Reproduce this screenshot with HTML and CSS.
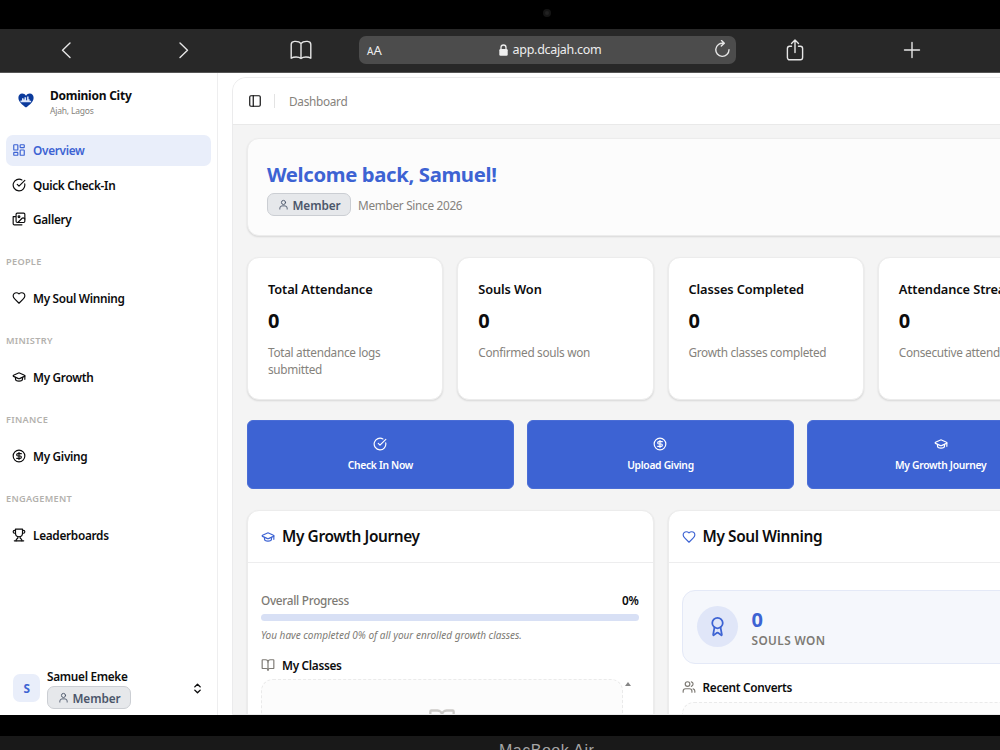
FILE: index.html
```html
<!DOCTYPE html>
<html lang="en">
<head>
    <meta charset="UTF-8">
    <meta name="viewport" content="width=device-width, initial-scale=1.0">
    <title>Dominion City - Dashboard</title>
    <link rel="stylesheet" href="styles.css">
</head>
<body>
    <!-- Icon set -->
    <svg class="sprite" aria-hidden="true">
        <symbol id="grid" viewBox="0 0 24 24"><rect x="3" y="3" width="7" height="9" rx="1"/><rect x="14" y="3" width="7" height="5" rx="1"/><rect x="14" y="12" width="7" height="9" rx="1"/><rect x="3" y="16" width="7" height="5" rx="1"/></symbol>
        <symbol id="check" viewBox="0 0 24 24"><path d="M21.8 10A10 10 0 1 1 17 3.34"/><path d="m9 11 3 3L22 4"/></symbol>
        <symbol id="images" viewBox="0 0 24 24"><path d="M17 22H4a2 2 0 0 1-2-2V8h4"/><path d="m22 12-1.3-1.300a2.400 2.400 0 0 0-3.400 0L10 18"/><circle cx="12" cy="8" r="1.500"/><rect x="7" y="2" width="15" height="16" rx="2"/></symbol>
        <symbol id="heart" viewBox="0 0 24 24"><path d="M19 14c1.49-1.46 3-3.21 3-5.5A5.5 5.5 0 0 0 16.5 3c-1.76 0-3 .5-4.5 2-1.5-1.5-2.74-2-4.5-2A5.5 5.5 0 0 0 2 8.5c0 2.3 1.5 4.05 3 5.5l7 7Z"/></symbol>
        <symbol id="cap" viewBox="0 0 24 24"><path d="M21.42 10.92a1 1 0 0 0-.02-1.84L12.83 5.18a2 2 0 0 0-1.66 0L2.6 9.08a1 1 0 0 0 0 1.83l8.57 3.91a2 2 0 0 0 1.66 0z"/><path d="M22 10v6"/><path d="M6 12.5V16a6 3 0 0 0 12 0v-3.5"/></symbol>
        <symbol id="dollar" viewBox="0 0 24 24"><circle cx="12" cy="12" r="10"/><path d="M16 8h-6a2 2 0 1 0 0 4h4a2 2 0 1 1 0 4H8"/><path d="M12 18V6"/></symbol>
        <symbol id="trophy" viewBox="0 0 24 24"><path d="M6 9H4.5a2.5 2.5 0 0 1 0-5H6"/><path d="M18 9h1.5a2.5 2.5 0 0 0 0-5H18"/><path d="M4 22h16"/><path d="M10 14.66V17c0 .55-.47.98-.97 1.21C7.85 18.75 7 20.24 7 22"/><path d="M14 14.66V17c0 .55.47.98.97 1.21C16.15 18.75 17 20.24 17 22"/><path d="M18 2H6v7a6 6 0 0 0 12 0V2Z"/></symbol>
        <symbol id="user" viewBox="0 0 24 24"><circle cx="12" cy="7.5" r="4.5"/><path d="M20 22v-2a5 5 0 0 0-5-5H9a5 5 0 0 0-5 5v2"/></symbol>
        <symbol id="users" viewBox="0 0 24 24"><path d="M17 21v-2a4 4 0 0 0-4-4H6a4 4 0 0 0-4 4v2"/><circle cx="9.500" cy="7" r="4"/><path d="M22 21v-2a4 4 0 0 0-3-3.870"/><path d="M16 3.130a4 4 0 0 1 0 7.750"/></symbol>
        <symbol id="updown" viewBox="0 0 24 24"><path d="m7 15 5 5 5-5"/><path d="m7 9 5-5 5 5"/></symbol>
        <symbol id="panel" viewBox="0 0 24 24"><rect x="3" y="3" width="18" height="18" rx="2"/><path d="M9 3v18"/></symbol>
        <symbol id="book" viewBox="0 0 24 24"><path d="M12 7v14"/><path d="M3 18a1 1 0 0 1-1-1V4a1 1 0 0 1 1-1h5a4 4 0 0 1 4 4 4 4 0 0 1 4-4h5a1 1 0 0 1 1 1v13a1 1 0 0 1-1 1h-6a3 3 0 0 0-3 3 3 3 0 0 0-3-3z"/></symbol>
        <symbol id="award" viewBox="0 0 24 24"><path d="m15.48 12.89 1.51 8.53a.5.5 0 0 1-.81.47l-3.58-2.69a1 1 0 0 0-1.2 0l-3.58 2.69a.5.5 0 0 1-.81-.47l1.51-8.53"/><circle cx="12" cy="8" r="6"/></symbol>
    </svg>

    <div class="bezel-top"><span class="camera"></span></div>

    <div class="toolbar">
        <svg class="tool" width="24" height="24" viewBox="0 0 24 24"><path d="M15 5 7.500 12.300l7.500 7.300"/></svg>
        <svg class="tool" width="24" height="24" viewBox="0 0 24 24"><path d="M8 5 15.500 12.300l-7.500 7.300"/></svg>
        <svg class="tool" width="24" height="24" viewBox="0 0 24 24"><path d="M12 5.500v15M12 5.500C10.500 3.700 8 3.200 5.500 3.400c-2 .2-3.300 1.300-3.300 3v13.800c2.500-1.500 7.300-1.800 9.800.3 2.500-2.100 7.300-1.800 9.800-.3V6.400c0-1.700-1.300-2.800-3.300-3-2.500-.2-5 .3-6.500 2.100z"/></svg>
        <div class="address">
            <span class="reader"><small>A</small>A</span>
            <span class="url">
                <svg width="9" height="12" viewBox="0 0 9 12"><path d="M2 5.500V3.500a2.500 2.500 0 0 1 5 0v2" fill="none" stroke="#eee" stroke-width="1.300"/><rect x=".3" y="5" width="8.400" height="6.800" rx="1.200" fill="#eee"/></svg>
                app.dcajah.com
            </span>
            <svg class="tool" width="18" height="20" viewBox="0 0 18 20"><path d="M10.600 3.300A6.600 6.600 0 1 0 16 9.800M8.500.500l2.800 2.800-3 2.800"/></svg>
        </div>
        <svg class="tool" width="24" height="24" viewBox="0 0 24 24"><path d="M8.500 8.200H6.600a2.200 2.200 0 0 0-2.200 2.200v9.200a2.200 2.200 0 0 0 2.200 2.200h10.800a2.200 2.200 0 0 0 2.200-2.200v-9.200a2.200 2.200 0 0 0-2.200-2.200h-1.900M12 14.500V2.200M8.500 5.500 12 2l3.500 3.500"/></svg>
        <svg class="tool" width="24" height="24" viewBox="0 0 24 24"><path d="M12 4.500v15M4.500 12h15"/></svg>
    </div>

    <div class="app">
        <aside class="sidebar">
            <div class="brand">
                <svg width="16" height="15" viewBox="0 0 16 15"><path d="M8 14.500C4 11.500.4 8.500.4 4.700.4 2.300 2 .6 4.200.6 5.800.6 7.100 1.400 8 2.700 8.900 1.400 10.200.6 11.800.6c2.200 0 3.800 1.700 3.800 4.100 0 3.800-3.600 6.800-7.600 9.800z" fill="#0b3a9c"/><path d="M2.500 9.200V7.500H4V5.200h1.500v1.300h1V4.200h1.600v3.100h1V3.600h1.500v2.600h1v1.500h1.500v1.500z" fill="#dce6fa"/></svg>
                <div>
                    <div class="brand-name">Dominion City</div>
                    <div class="brand-sub">Ajah, Lagos</div>
                </div>
            </div>
            <nav class="nav">
                <a class="nav-item active"><svg class="icon"><use href="#grid"/></svg>Overview</a>
                <a class="nav-item"><svg class="icon"><use href="#check"/></svg>Quick Check-In</a>
                <a class="nav-item"><svg class="icon"><use href="#images"/></svg>Gallery</a>
            </nav>
            <div class="nav-label">PEOPLE</div>
            <a class="nav-item"><svg class="icon"><use href="#heart"/></svg>My Soul Winning</a>
            <div class="nav-label">MINISTRY</div>
            <a class="nav-item"><svg class="icon"><use href="#cap"/></svg>My Growth</a>
            <div class="nav-label">FINANCE</div>
            <a class="nav-item"><svg class="icon"><use href="#dollar"/></svg>My Giving</a>
            <div class="nav-label">ENGAGEMENT</div>
            <a class="nav-item"><svg class="icon"><use href="#trophy"/></svg>Leaderboards</a>

            <div class="account">
                <div class="avatar">S</div>
                <div class="account-info">
                    <div class="account-name">Samuel Emeke</div>
                    <span class="badge"><svg class="icon"><use href="#user"/></svg>Member</span>
                </div>
                <svg class="icon"><use href="#updown"/></svg>
            </div>
        </aside>

        <main class="main">
            <header class="topbar">
                <svg class="icon"><use href="#panel"/></svg>
                <span class="divider"></span>
                <span class="crumb">Dashboard</span>
            </header>
            <div class="content">
                <section class="card welcome">
                    <h1>Welcome back, Samuel!</h1>
                    <div class="meta">
                        <span class="badge"><svg class="icon"><use href="#user"/></svg>Member</span>
                        <span class="since">Member Since 2026</span>
                    </div>
                </section>

                <section class="stats">
                    <div class="card stat">
                        <h2>Total Attendance</h2>
                        <strong>0</strong>
                        <p>Total attendance logs submitted</p>
                    </div>
                    <div class="card stat">
                        <h2>Souls Won</h2>
                        <strong>0</strong>
                        <p>Confirmed souls won</p>
                    </div>
                    <div class="card stat">
                        <h2>Classes Completed</h2>
                        <strong>0</strong>
                        <p>Growth classes completed</p>
                    </div>
                    <div class="card stat">
                        <h2>Attendance Streak</h2>
                        <strong>0</strong>
                        <p>Consecutive attendance</p>
                    </div>
                </section>

                <section class="actions">
                    <button class="action"><svg class="icon"><use href="#check"/></svg>Check In Now</button>
                    <button class="action"><svg class="icon"><use href="#dollar"/></svg>Upload Giving</button>
                    <button class="action"><svg class="icon"><use href="#cap"/></svg>My Growth Journey</button>
                </section>

                <section class="panels">
                    <div class="card panel">
                        <div class="panel-head"><svg class="icon"><use href="#cap"/></svg>My Growth Journey</div>
                        <div class="panel-body">
                            <div class="progress-row"><span>Overall Progress</span><b>0%</b></div>
                            <div class="progress"></div>
                            <p class="note">You have completed 0% of all your enrolled growth classes.</p>
                            <div class="sub-head"><svg class="icon"><use href="#book"/></svg>My Classes</div>
                            <div class="scroll-area">
                                <div class="empty"><svg class="icon"><use href="#book"/></svg></div>
                                <span class="scroll-arrow"></span>
                            </div>
                        </div>
                    </div>
                    <div class="card panel">
                        <div class="panel-head"><svg class="icon"><use href="#heart"/></svg>My Soul Winning</div>
                        <div class="panel-body">
                            <div class="souls">
                                <div class="medal"><svg class="icon"><use href="#award"/></svg></div>
                                <div class="souls-info">
                                    <div class="souls-count">0</div>
                                    <div class="souls-label">SOULS WON</div>
                                </div>
                            </div>
                            <div class="sub-head converts"><svg class="icon"><use href="#users"/></svg>Recent Converts</div>
                            <div class="empty"></div>
                        </div>
                    </div>
                </section>
            </div>
        </main>
    </div>

    <div class="bezel-bottom"></div>
    <div class="chin"><span>MacBook Air</span></div>
</body>
</html>
```

FILE: styles.css
```css
* {
    box-sizing: border-box;
}
body {
    margin: 0;
    height: 750px;
    display: flex;
    flex-direction: column;
    overflow: hidden;
    background: #000;
    color: #0c0c0d;
    font-family: "Noto Sans", "Open Sans", sans-serif;
    font-size: 11.8px;
    letter-spacing: -0.3px;
}
h1, h2, p {
    margin: 0;
}
.sprite {
    position: absolute;
    width: 0;
    height: 0;
}
.icon {
    width: 14px;
    height: 14px;
    flex: none;
    fill: none;
    stroke: currentColor;
    stroke-width: 2;
    stroke-linecap: round;
    stroke-linejoin: round;
}

/* Device frame */
.bezel-top {
    flex: none;
    height: 29px;
    padding: 9px 0 0 543px;
}
.camera {
    display: block;
    width: 8px;
    height: 8px;
    border-radius: 50%;
    background: #222;
    border: 2px solid #151515;
}
.bezel-bottom {
    flex: none;
    height: 21px;
}
.chin {
    flex: none;
    height: 14px;
    padding: 5px 0 0 499px;
    overflow: hidden;
    background: #191919;
    color: #a5a5a5;
    font-family: "Liberation Sans", Arial, sans-serif;
    font-size: 16px;
    line-height: 19px;
    letter-spacing: 0.5px;
}

/* Browser toolbar */
.toolbar {
    flex: none;
    height: 44px;
    padding: 0 0 2px 8px;
    display: grid;
    grid-template-columns: 117px 117px 117px 377px 117px 117px;
    align-items: center;
    justify-items: center;
    background: #282828;
    border-bottom: 1px solid #555;
}
.tool {
    fill: none;
    stroke: #e6e6e6;
    stroke-width: 1.4;
    stroke-linecap: round;
    stroke-linejoin: round;
}
.address {
    width: 377px;
    height: 28px;
    padding: 0 5px 0 8px;
    display: flex;
    align-items: center;
    justify-content: space-between;
    border-radius: 7px;
    background: #4c4c4c;
    color: #eee;
}
.reader {
    width: 20px;
    font-size: 13px;
    letter-spacing: 0;
}
.reader small {
    font-size: 10px;
}
.url {
    display: flex;
    align-items: center;
    gap: 5px;
    font-size: 12.5px;
}

/* Sidebar */
.app {
    flex: none;
    height: 642px;
    display: flex;
    overflow: hidden;
    background: #fff;
}
.sidebar {
    flex: none;
    width: 218px;
    height: 642px;
    padding: 0 6px 6px 6px;
    display: flex;
    flex-direction: column;
    border-right: 1px solid #eeeeef;
}
.brand {
    height: 62px;
    padding: 15px 0 0 12px;
    display: flex;
    gap: 16px;
}
.brand > svg {
    margin-top: 5px;
}
.brand-name {
    font-size: 12px;
    font-weight: 700;
    line-height: 16px;
    letter-spacing: -0.25px;
}
.brand-sub {
    font-size: 8.5px;
    line-height: 13px;
    letter-spacing: -0.2px;
    color: #85827c;
}
.nav {
    display: flex;
    flex-direction: column;
    gap: 4px;
}
.nav-item {
    height: 30.5px;
    padding: 0 6px;
    display: flex;
    align-items: center;
    gap: 7px;
    border-radius: 7px;
    font-weight: 600;
}
.nav-item.active {
    background: #e9eefa;
    color: #3d63d3;
}
.nav-label {
    padding: 13.5px 0 7px;
    line-height: 28px;
    font-size: 9.2px;
    font-weight: 600;
    letter-spacing: 0.3px;
    color: #b3b1ad;
}
.account {
    margin-top: auto;
    padding: 0 7px;
    display: flex;
    align-items: center;
    gap: 7px;
}
.account > .icon {
    width: 13px;
    height: 13px;
    margin-bottom: 1px;
    stroke-width: 2.6;
}
.avatar {
    width: 27px;
    height: 28px;
    margin-bottom: 1px;
    border-radius: 7px;
    background: #e9eefa;
    color: #3d63d3;
    font-weight: 700;
    line-height: 28px;
    text-align: center;
}
.account-info {
    flex: 1;
}
.account-name {
    font-weight: 600;
    line-height: 17px;
}
.badge {
    width: 84px;
    height: 23px;
    display: flex;
    align-items: center;
    justify-content: center;
    gap: 4px;
    border: 1px solid #cbced3;
    border-radius: 7px;
    background: #e6e8eb;
    color: #4b566a;
    font-weight: 600;
    letter-spacing: -0.1px;
}
.badge .icon {
    width: 11px;
    height: 11px;
}
.account-info .badge {
    margin-top: 1px;
}

/* Main area */
.main {
    flex: none;
    width: 857px;
    margin: 4px 0 0 14px;
    border: 1px solid #ebebec;
    border-radius: 14px 14px 0 0;
    overflow: hidden;
    background: #f4f4f4;
}
.topbar {
    height: 47px;
    padding-left: 15px;
    display: flex;
    align-items: center;
    background: #fff;
    border-bottom: 1px solid #e9e9e9;
}
.divider {
    width: 1px;
    height: 14px;
    margin: 0 14px 0 12px;
    background: #e3e3e3;
}
.crumb {
    color: #85827c;
}
.content {
    padding: 13px 14px;
    display: flex;
    flex-direction: column;
    gap: 20.6px;
}
.card {
    border: 1px solid #ececec;
    border-radius: 12px;
    background: #fff;
    box-shadow: 0 1px 2px rgba(0, 0, 0, 0.12);
}
.welcome {
    height: 98px;
    padding: 22px 19px 0;
    background: #fcfcfc;
}
.welcome h1 {
    font-size: 20.3px;
    line-height: 27px;
    color: #3d63d3;
    letter-spacing: -0.35px;
}
.meta {
    margin-top: 5px;
    display: flex;
    align-items: center;
    gap: 7px;
}
.since {
    color: #85827c;
}
.stats {
    display: grid;
    grid-template-columns: repeat(4, 1fr);
    gap: 14px;
}
.stat {
    height: 143px;
    padding: 21px 20px;
}
.stat h2 {
    font-size: 12.8px;
    line-height: 20px;
    font-weight: 600;
    letter-spacing: -0.1px;
    white-space: nowrap;
}
.stat strong {
    display: block;
    margin-top: 8px;
    font-size: 20px;
    line-height: 27px;
}
.stat p {
    margin-top: 10px;
    line-height: 17px;
    color: #85827c;
}
.actions {
    display: grid;
    grid-template-columns: repeat(3, 1fr);
    gap: 13.5px;
}
.action {
    height: 69px;
    padding: 0;
    display: flex;
    flex-direction: column;
    align-items: center;
    justify-content: center;
    gap: 7px;
    border: 1px solid #4a6dd6;
    border-radius: 6px;
    background: #3d63d3;
    color: #fff;
    font-family: inherit;
    font-size: 10.3px;
    font-weight: 600;
    letter-spacing: -0.3px;
}
.panels {
    display: grid;
    grid-template-columns: 1fr 1fr;
    gap: 14px;
}
.panel {
    height: 400px;
}
.panel-head {
    height: 52px;
    padding: 1px 13px 0;
    display: flex;
    align-items: center;
    gap: 7px;
    border-bottom: 1px solid #ededee;
    font-size: 15.4px;
    font-weight: 600;
    letter-spacing: -0.38px;
}
.panel-head .icon {
    color: #3d63d3;
}
.panel-body {
    padding: 27px 14px 0 13px;
}
.progress-row {
    padding-top: 1px;
    display: flex;
    justify-content: space-between;
    line-height: 18px;
    color: #7d7a74;
}
.progress-row span {
    font-weight: 500;
}
.progress-row b {
    font-weight: 600;
    color: #0c0c0d;
}
.progress {
    height: 7px;
    margin-top: 5px;
    border-radius: 4px;
    background: #d8e0f5;
}
.note {
    margin-top: 6px;
    font-size: 10px;
    font-style: italic;
    line-height: 16px;
    letter-spacing: 0;
    color: #7d7a74;
}
.sub-head {
    margin-top: 13px;
    height: 18px;
    display: flex;
    align-items: center;
    gap: 7px;
    font-weight: 600;
}
.sub-head .icon {
    color: #7d7a74;
}
.scroll-area {
    margin-top: 5px;
    display: flex;
    align-items: flex-start;
    gap: 2px;
}
.empty {
    flex: 1;
    height: 150px;
    padding-top: 27px;
    border: 1px dashed #eaeaea;
    border-radius: 12px;
    background: #fcfcfc;
    text-align: center;
}
.empty .icon {
    width: 28px;
    height: 28px;
    color: #cbc9c6;
}
.scroll-arrow {
    margin: 3px 8px 0 0;
    border: 3px solid transparent;
    border-top: 0;
    border-bottom: 4px solid #858585;
}
.souls {
    height: 74px;
    padding: 0 14px;
    display: flex;
    align-items: center;
    gap: 14px;
    border: 1px solid #e4e9f7;
    border-radius: 13px;
    background: #f5f7fc;
}
.medal {
    width: 41px;
    height: 41px;
    display: flex;
    align-items: center;
    justify-content: center;
    border-radius: 50%;
    background: #e0e6f8;
    color: #3d63d3;
}
.medal .icon {
    width: 21px;
    height: 21px;
}
.souls-info {
    padding-top: 2px;
}
.souls-count {
    font-size: 20px;
    font-weight: 700;
    line-height: 25px;
    color: #3d63d3;
}
.souls-label {
    font-weight: 600;
    line-height: 17px;
    letter-spacing: 0.4px;
    color: #7d7a74;
}
.converts {
    margin-top: 14px;
}
.converts + .empty {
    margin-top: 6px;
}
```
